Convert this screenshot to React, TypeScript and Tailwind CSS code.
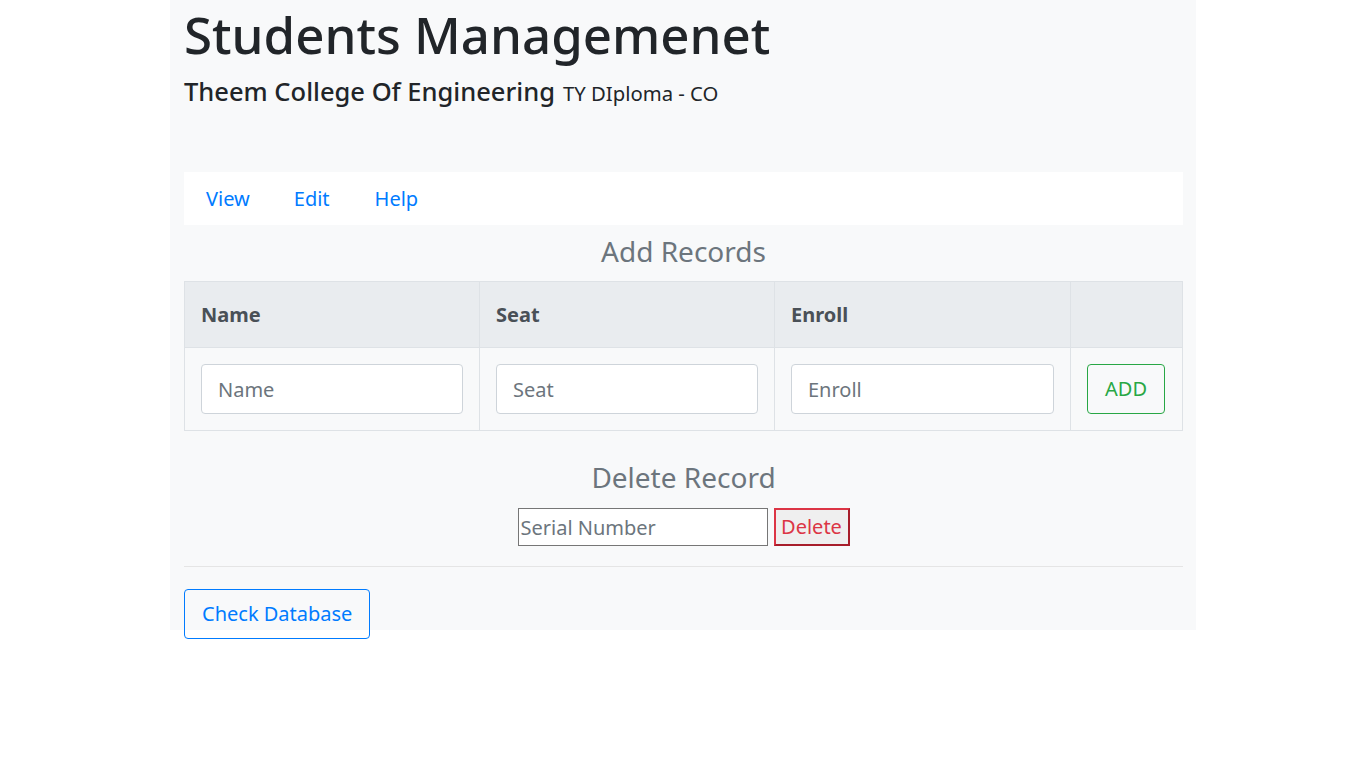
import React from "react";

export default function App() {
  const font = { fontFamily: '"Noto Sans", "Open Sans", sans-serif' };
  return (
    <div className="min-h-[768px] w-full bg-white text-[20px] text-[#212529]" style={font}>
      <div className="ml-[170px] w-[1026px] bg-[#f8f9fa] pl-[14px] pr-[13px]">
        <h1 className="text-[51px] font-medium leading-[68px] text-[#212529]">
          Students Managemenet
        </h1>
        <div className="mt-[5px] leading-[36px]">
          <span className="text-[25.5px] font-medium">Theem College Of Engineering</span>
          <span className="ml-[8px] text-[20.3px]">TY DIploma - CO</span>
        </div>
        <nav className="mt-[60px] flex h-[53px] items-center bg-white px-[22px]">
          <a className="mr-[44px] text-[20px] text-[#007bff]" href="#">View</a>
          <a className="mr-[45px] text-[20px] text-[#007bff]" href="#">Edit</a>
          <a className="text-[20px] text-[#007bff]" href="#">Help</a>
        </nav>
        <h3 className="flex h-[56px] items-center justify-center pb-[4px] text-[28px] text-[#6c757d]">
          Add Records
        </h3>
        <table className="w-full border-collapse border border-[#dee2e6]">
          <thead>
            <tr className="h-[66px] bg-[#e9ecef] text-left text-[#495057]">
              <th className="w-[295px] border border-[#dee2e6] px-[16px] font-bold">Name</th>
              <th className="w-[295px] border border-[#dee2e6] px-[16px] font-bold">Seat</th>
              <th className="w-[296px] border border-[#dee2e6] px-[16px] font-bold">Enroll</th>
              <th className="border border-[#dee2e6] px-[16px]"></th>
            </tr>
          </thead>
          <tbody>
            <tr className="h-[83px]">
              <td className="border border-[#dee2e6] px-[16px]">
                <input
                  className="h-[50px] w-full rounded-[4px] border border-[#ced4da] bg-white px-[16px] text-[20px] text-[#495057] placeholder:text-[#6c757d]"
                  placeholder="Name"
                  style={font}
                />
              </td>
              <td className="border border-[#dee2e6] px-[16px]">
                <input
                  className="h-[50px] w-full rounded-[4px] border border-[#ced4da] bg-white px-[16px] text-[20px] text-[#495057] placeholder:text-[#6c757d]"
                  placeholder="Seat"
                  style={font}
                />
              </td>
              <td className="border border-[#dee2e6] px-[16px]">
                <input
                  className="h-[50px] w-full rounded-[4px] border border-[#ced4da] bg-white px-[16px] text-[20px] text-[#495057] placeholder:text-[#6c757d]"
                  placeholder="Enroll"
                  style={font}
                />
              </td>
              <td className="border border-[#dee2e6] px-[16px]">
                <button className="h-[50px] w-[78px] rounded-[4px] border border-[#28a745] text-[20px] text-[#28a745]">
                  ADD
                </button>
              </td>
            </tr>
          </tbody>
        </table>
        <h3 className="mt-[28px] flex h-[40px] items-center justify-center pb-[4px] text-[28px] text-[#6c757d]">
          Delete Record
        </h3>
        <div className="mt-[9px] flex justify-center gap-[6px]">
          <input
            className="h-[38px] w-[250px] border border-[#767676] bg-white px-[2px] text-[20px] placeholder:text-[#6c757d]"
            placeholder="Serial Number"
            style={font}
          />
          <button className="h-[38px] w-[76px] border-2 border-t-[#dc3545] border-l-[#dc3545] border-r-[#a71d2a] border-b-[#a71d2a] bg-[#efefef] text-[20px] text-[#dc3545]">
            Delete
          </button>
        </div>
        <hr className="mt-[20px] border-t border-[#e5e5e5]" />
        <div className="pt-[22px]">
          <button className="-mb-[9px] h-[50px] rounded-[4px] border border-[#007bff] px-[17px] text-[20px] text-[#007bff]">
            Check Database
          </button>
        </div>
      </div>
    </div>
  );
}
